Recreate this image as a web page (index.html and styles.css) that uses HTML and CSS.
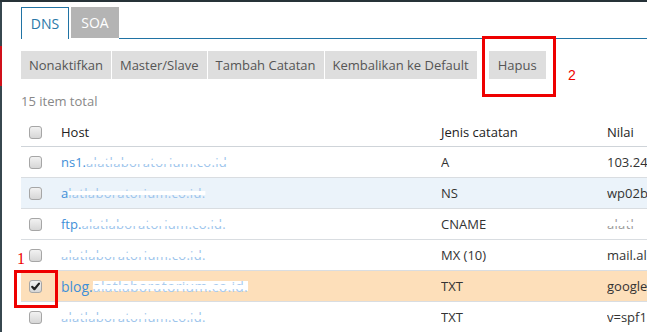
FILE: index.html
```html
<!DOCTYPE html>
<html>
<head>
<meta charset="utf-8">
<link rel="stylesheet" href="styles.css">
</head>
<body>
<div class="topbar"></div>
<div class="frame">
  <div class="side"><div class="side-red"></div></div>
  <main class="main">
    <div class="tabs">
      <div class="tab active">DNS</div>
      <div class="tab">SOA</div>
      <div class="tab-line"></div>
    </div>
    <div class="toolbar">
      <div class="btn-group">
        <span class="btn">Nonaktifkan</span>
        <span class="btn">Master/Slave</span>
        <span class="btn">Tambah Catatan</span>
        <span class="btn">Kembalikan ke Default</span>
      </div>
      <span class="btn btn-del">Hapus</span>
    </div>
    <div class="total">15 item total</div>
    <table class="grid">
      <colgroup><col class="c-chk"><col class="c-host"><col class="c-type"><col class="c-val"></colgroup>
      <thead>
        <tr><th><span class="cb"></span></th><th>Host</th><th>Jenis catatan</th><th>Nilai</th></tr>
      </thead>
      <tbody>
        <tr><td><span class="cb"></span></td><td><span class="host">ns1.<span class="mask">alatlaboratorium.co.id</span></span></td><td>A</td><td>103.24</td></tr>
        <tr class="hl"><td><span class="cb"></span></td><td><span class="host">a<span class="mask">latlaboratorium.co.id.</span></span></td><td>NS</td><td>wp02b</td></tr>
        <tr><td><span class="cb"></span></td><td><span class="host">ftp.<span class="mask">alatlaboratorium.co.id.</span></span></td><td>CNAME</td><td><span class="mask dark">alatl</span></td></tr>
        <tr><td><span class="cb"></span></td><td><span class="host"><span class="mask">alatlaboratorium.co.id.</span></span></td><td>MX (10)</td><td>mail.al</td></tr>
        <tr class="sel"><td><span class="cb checked"><svg viewBox="0 0 13 13" width="13" height="13"><path d="M3.2 6.8 L5.4 9.2 L10 3.6" fill="none" stroke="#222" stroke-width="2.2" stroke-linecap="round" stroke-linejoin="round"/></svg></span></td><td><span class="host big">blog.<span class="mask box">alatlaboratorium.co.id.</span></span></td><td>TXT</td><td>google</td></tr>
        <tr><td><span class="cb"></span></td><td><span class="host"><span class="mask">alatlaboratorium.co.id.</span></span></td><td>TXT</td><td>v=spf1</td></tr>
      </tbody>
    </table>
    <div class="mark mark-2"></div>
    <div class="num num-2">2</div>
    <div class="mark mark-1"></div>
    <div class="num num-1">1</div>
  </main>
</div>
</body>
</html>
```

FILE: styles.css
```css
html, body {
  margin: 0;
  padding: 0;
  width: 647px;
  height: 332px;
  overflow: hidden;
  background: #fff;
  font-family: "Open Sans", "Liberation Sans", sans-serif;
  font-size: 13px;
  color: #333;
}
.topbar {
  height: 2px;
  background: #263238;
}
.frame {
  display: flex;
  height: 330px;
}
.side {
  width: 2px;
  background: #37474f;
  flex: none;
}
.side-red {
  margin-top: 44px;
  height: 40px;
  background: #d0101a;
}
.main {
  position: relative;
  flex: 1;
  padding-left: 19px;
  min-width: 0;
  overflow: hidden;
}
.tabs {
  display: flex;
  align-items: flex-end;
  gap: 2px;
  margin-top: 5px;
  height: 32px;
}
.tab {
  width: 48px;
  height: 31px;
  box-sizing: border-box;
  display: flex;
  align-items: center;
  justify-content: center;
  background: #b4b4b4;
  color: #fff;
  font-size: 14px;
  margin-bottom: 1px;
}
.tab.active {
  background: #fff;
  color: #2a78a8;
  border: 1px solid #2073a4;
  border-bottom: none;
  height: 32px;
  margin-bottom: 0;
}
.tab-line {
  flex: 1;
  height: 1px;
  background: #2073a4;
  margin-left: -2px;
}
.toolbar {
  display: flex;
  align-items: center;
  margin-top: 12px;
  height: 28px;
}
.btn-group {
  display: flex;
  gap: 1px;
}
.btn {
  height: 28px;
  box-sizing: border-box;
  background: #dedede;
  color: #555;
  padding: 0 8px;
  display: flex;
  align-items: center;
}
.btn-del {
  margin-left: 12px;
  padding: 0 9px;
}
.total {
  margin-top: 13px;
  color: #888;
  height: 18px;
  line-height: 18px;
}
.grid {
  margin-top: 8px;
  border-collapse: collapse;
  table-layout: fixed;
  width: 626px;
}
.c-chk { width: 40px; }
.c-host { width: 380px; }
.c-type { width: 166px; }
.c-val { width: 40px; }
.grid th {
  font-weight: normal;
  text-align: left;
  color: #222;
  height: 28px;
  padding: 0;
  border-bottom: 1px solid #cfd4d9;
  white-space: nowrap;
}
.grid td {
  height: 30px;
  padding: 0;
  border-bottom: 1px solid #d9dde1;
  white-space: nowrap;
  overflow: hidden;
}
.grid th:first-child, .grid td:first-child {
  padding-left: 8px;
}
.grid tr.hl td { background: #ebf3fa; }
.grid tr.sel td { background: #fddfba; }
.cb {
  display: block;
  width: 13px;
  height: 13px;
  box-sizing: border-box;
  border: 1px solid #a6a6a6;
  border-radius: 3px;
  background: linear-gradient(#f2f2f2, #d6d6d6);
  position: relative;
}
.cb svg {
  position: absolute;
  left: -1px;
  top: -1px;
}
.host {
  color: #3f8fd8;
}
.host.big { font-size: 14px; }
.mask {
  text-decoration: line-through;
  text-decoration-color: #fff;
  text-decoration-thickness: 4px;
  color: #9cc4ec;
  letter-spacing: 0.3px;
}
.mask.box {
  background: linear-gradient(#fddfba 0, #fddfba 4px, #fff 4px, #fff 14px, #fddfba 14px);
  color: #a9cbee;
}
.mask.dark { color: #999; }
.mark {
  position: absolute;
  border: 3px solid #ee0000;
  box-sizing: border-box;
}
.mark-2 {
  left: 480px;
  top: 34px;
  width: 74px;
  height: 61px;
}
.mark-1 {
  left: 12px;
  top: 268px;
  width: 44px;
  height: 38px;
}
.num {
  position: absolute;
  color: #e00;
  font-family: "Liberation Serif", serif;
  font-size: 15px;
  line-height: 15px;
}
.num-2 {
  left: 566px;
  top: 66px;
  font-family: "Liberation Sans", sans-serif;
  font-size: 14px;
}
.num-1 {
  left: 15px;
  top: 249px;
  font-size: 16px;
}
```
